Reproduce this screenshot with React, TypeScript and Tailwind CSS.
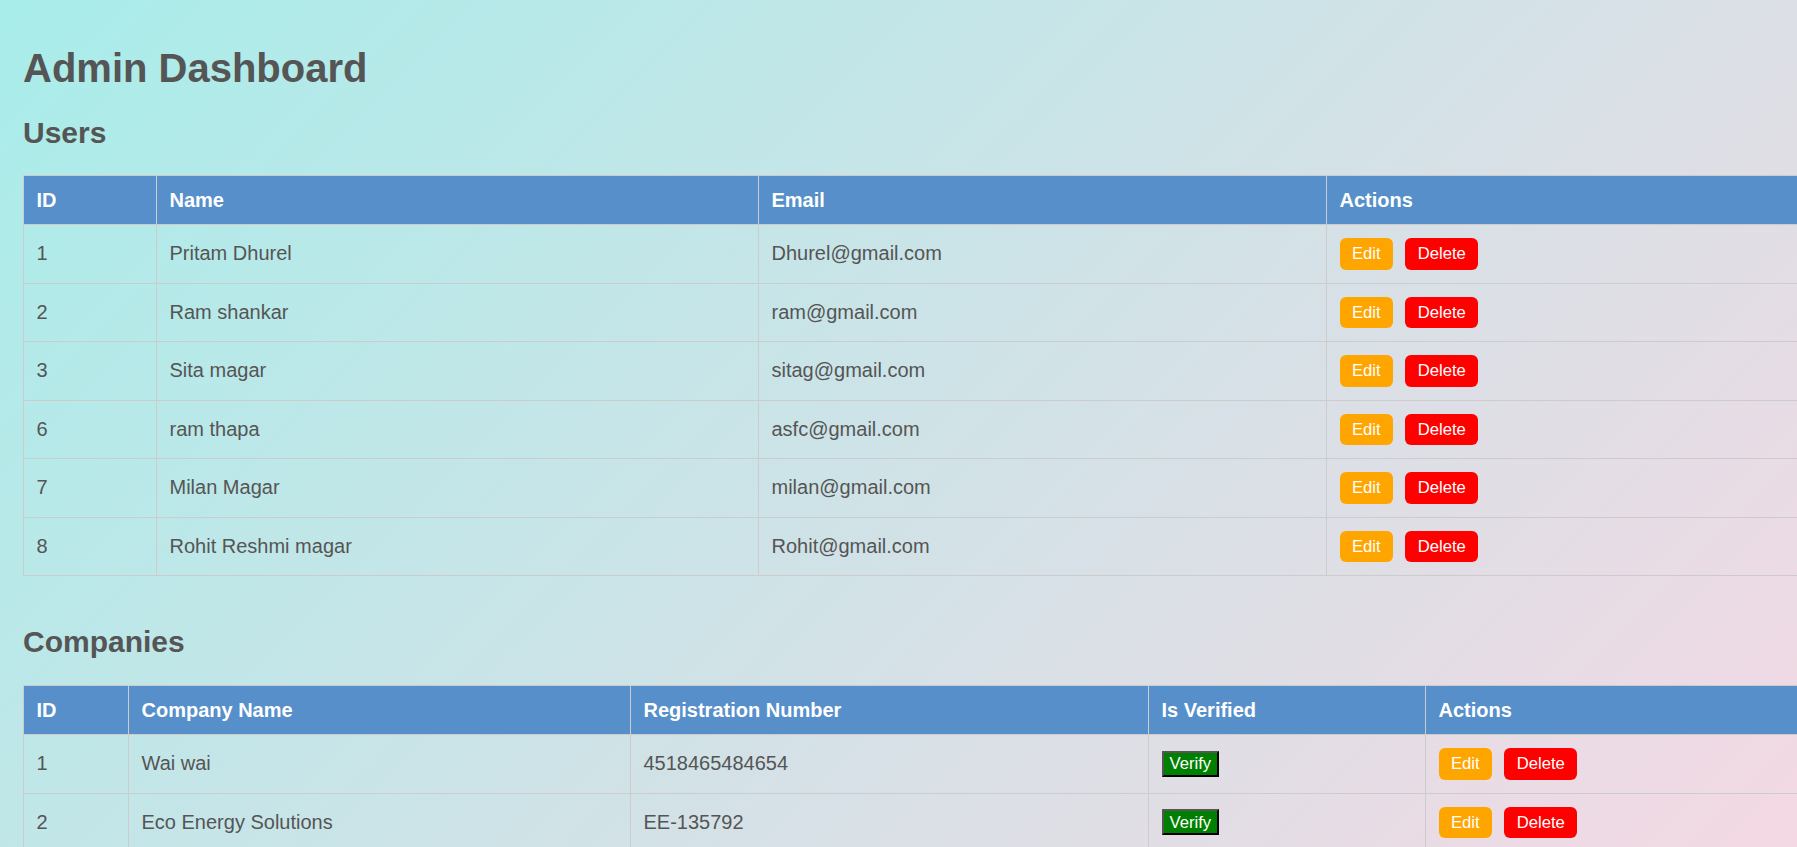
const users = [
    { id: 1, name: 'Pritam Dhurel', email: 'Dhurel@gmail.com' },
    { id: 2, name: 'Ram shankar', email: 'ram@gmail.com' },
    { id: 3, name: 'Sita magar', email: 'sitag@gmail.com' },
    { id: 6, name: 'ram thapa', email: 'asfc@gmail.com' },
    { id: 7, name: 'Milan Magar', email: 'milan@gmail.com' },
    { id: 8, name: 'Rohit Reshmi magar', email: 'Rohit@gmail.com' },
];

const companies = [
    { id: 1, name: 'Wai wai', regNo: '4518465484654' },
    { id: 2, name: 'Eco Energy Solutions', regNo: 'EE-135792' },
];

const thClass = 'border border-[#cccccc] px-[12.5px] py-[12.5px] text-left font-bold text-white leading-[23px]';
const tdClass = 'border border-[#cccccc] px-[12.5px] h-[58.5px] align-middle leading-[23px]';

const ActionButtons = () => (
    <>
        <button className="bg-[#ffa500] text-white text-[16.67px] leading-[19px] px-[12.5px] py-[6.25px] rounded-[6px]">
            Edit
        </button>
        <button className="ml-[12px] bg-[#ff0000] text-white text-[16.67px] leading-[19px] px-[12.5px] py-[6.25px] rounded-[6px]">
            Delete
        </button>
    </>
);

const App = () => {
    return (
        <div className="h-screen overflow-hidden">
            <div className="min-h-[1200px] bg-[linear-gradient(135deg,#a8edea,#fed6e3)] pl-[23px] pt-[45px] text-[#555555] text-[20px] font-['Liberation_Sans',Arial,sans-serif]">
                <h1 className="text-[40px] font-bold leading-[46px] mb-[25px]">Admin Dashboard</h1>

                <h2 className="text-[30px] font-bold leading-[34px] mb-[25px]">Users</h2>
                <table className="table-fixed border-collapse w-[1900px] mb-[49px]">
                    <colgroup>
                        <col className="w-[133px]" />
                        <col className="w-[602px]" />
                        <col className="w-[568px]" />
                        <col />
                    </colgroup>
                    <thead>
                        <tr className="bg-[#568fca]">
                            <th className={thClass}>ID</th>
                            <th className={thClass}>Name</th>
                            <th className={thClass}>Email</th>
                            <th className={thClass}>Actions</th>
                        </tr>
                    </thead>
                    <tbody>
                        {users.map((u) => (
                            <tr key={u.id}>
                                <td className={tdClass}>{u.id}</td>
                                <td className={tdClass}>{u.name}</td>
                                <td className={tdClass}>{u.email}</td>
                                <td className={tdClass}>
                                    <ActionButtons />
                                </td>
                            </tr>
                        ))}
                    </tbody>
                </table>

                <h2 className="text-[30px] font-bold leading-[34px] mb-[26px]">Companies</h2>
                <table className="table-fixed border-collapse w-[1900px]">
                    <colgroup>
                        <col className="w-[105px]" />
                        <col className="w-[502px]" />
                        <col className="w-[518px]" />
                        <col className="w-[277px]" />
                        <col />
                    </colgroup>
                    <thead>
                        <tr className="bg-[#568fca]">
                            <th className={thClass}>ID</th>
                            <th className={thClass}>Company Name</th>
                            <th className={thClass}>Registration Number</th>
                            <th className={thClass}>Is Verified</th>
                            <th className={thClass}>Actions</th>
                        </tr>
                    </thead>
                    <tbody>
                        {companies.map((c) => (
                            <tr key={c.id}>
                                <td className={tdClass}>{c.id}</td>
                                <td className={tdClass}>{c.name}</td>
                                <td className={tdClass}>{c.regNo}</td>
                                <td className={tdClass}>
                                    <button className="bg-[#008000] text-white text-[16.67px] leading-[19px] px-[6px] py-[1.5px] border-2 border-t-[#555555] border-l-[#555555] border-r-black border-b-black">
                                        Verify
                                    </button>
                                </td>
                                <td className={tdClass}>
                                    <ActionButtons />
                                </td>
                            </tr>
                        ))}
                    </tbody>
                </table>
            </div>
        </div>
    );
};

export default App;
